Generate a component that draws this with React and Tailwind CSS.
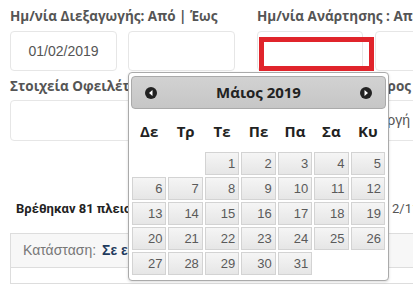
import React from 'react'

const dayNames = ['Δε', 'Τρ', 'Τε', 'Πε', 'Πα', 'Σα', 'Κυ']

// May 2019 starts on a Wednesday
const days = [null, null, ...Array.from({ length: 31 }, (_, i) => i + 1), null, null]

const label = "text-[13.5px] leading-[20px] h-[20px] font-bold text-[#555] whitespace-nowrap font-['Open_Sans',sans-serif]"
const input = 'h-[40px] bg-white border border-[#e6e6e6] rounded-[4px]'

const Arrow = ({ dir }) => (
    <svg width="12" height="12" viewBox="0 0 12 12">
        <circle cx="6" cy="6" r="6" fill="#222" />
        {dir === 'prev'
            ? <polygon points="7.5,3 7.5,9 4,6" fill="#fff" />
            : <polygon points="4.5,3 4.5,9 8,6" fill="#fff" />}
    </svg>
)

const DatePicker = () => {
    return (
        <div className="absolute left-[128px] top-[72px] w-[261px] h-[209px] bg-white border border-[#aaa] rounded-[4px] px-[2px] pt-[3px] shadow-[0_1px_3px_rgba(0,0,0,0.15)]">
            <div className="h-[33px] flex items-center justify-between px-[13px] rounded-[4px] border border-[#aaa] bg-gradient-to-b from-[#d2d2d2] to-[#c6c6c6]">
                <Arrow dir="prev" />
                <span className="text-[15px] font-bold text-[#222] font-['Open_Sans',sans-serif]">Μάιος 2019</span>
                <Arrow dir="next" />
            </div>
            <div className="grid grid-cols-7">
                {dayNames.map((d) => (
                    <div key={d} className="h-[42px] pt-[2px] flex items-center justify-center text-[15px] font-bold text-[#222] font-['Open_Sans',sans-serif]">
                        {d}
                    </div>
                ))}
                {days.map((d, i) => (
                    <div key={i} className="p-[1px]">
                        {d ? (
                            <div className="h-[23px] border border-[#d3d3d3] bg-gradient-to-b from-[#f5f5f5] to-[#e6e6e6] text-right pr-[3px] pt-[1px] text-[13px] leading-[20px] text-[#5a5a5a] font-['Liberation_Sans',sans-serif]">
                                {d}
                            </div>
                        ) : (
                            <div className="h-[23px]" />
                        )}
                    </div>
                ))}
            </div>
        </div>
    )
}

const App = () => {
    return (
        <div className="relative w-[413px] h-[294px] overflow-hidden bg-white">
            <div className="pl-[10px]">
                <div className="flex">
                    <div className="w-[225px] shrink-0">
                        <div className={`${label} mt-[6px]`}>Ημ/νία Διεξαγωγής: Από | Έως</div>
                        <div className="flex gap-[11px] mt-[5px]">
                            <div className={`${input} w-[107px] flex items-center justify-center text-[14px] text-[#555] font-['Liberation_Sans',sans-serif]`}>01/02/2019</div>
                            <div className={`${input} w-[107px]`}></div>
                        </div>
                    </div>
                    <div className="ml-[22px] shrink-0">
                        <div className={`${label} mt-[6px]`}>Ημ/νία Ανάρτησης : Από | Έως</div>
                        <div className="flex gap-[12px] mt-[5px]">
                            <div className={`${input} w-[106px]`}></div>
                            <div className={`${input} w-[106px]`}></div>
                        </div>
                    </div>
                </div>

                <div className="flex">
                    <div className="w-[225px] shrink-0">
                        <div className={`${label} mt-[5px]`}>Στοιχεία Οφειλέτη</div>
                        <div className={`${input} h-[41px] mt-[4px]`}></div>
                    </div>
                    <div className="ml-[22px] w-[154px] shrink-0">
                        <div className={`${label} mt-[5px] text-right`}>Φορέας Προς</div>
                        <div className={`${input} h-[41px] mt-[4px] w-[200px] flex items-center justify-end pr-[46px] text-[14px] text-[#555] font-['Liberation_Sans',sans-serif]`}>Ενεργή</div>
                    </div>
                </div>

                <div className="flex justify-between mt-[58px] h-[20px] items-center pl-[6px] font-['Roboto',sans-serif]">
                    <span className="text-[13px] font-bold text-[#222]">Βρέθηκαν 81 πλειστηριασμοί</span>
                    <span className="text-[13px] text-[#555] w-[21px] overflow-hidden whitespace-nowrap">2/11</span>
                </div>

                <div className="mt-[14px] w-[420px] border border-[#ddd]">
                    <div className="h-[33px] bg-[#f7f7f7] flex items-center pl-[12px] gap-[6px] text-[14px] font-['Liberation_Sans',sans-serif]">
                        <span className="text-[#777]">Κατάσταση:</span>
                        <span className="font-bold text-[#1f3b5e]">Σε εξέλιξη</span>
                    </div>
                    <div className="h-[16px] border-t border-[#ddd] bg-white"></div>
                </div>
            </div>

            <DatePicker />

            <div className="absolute left-[259px] top-[37px] w-[115px] h-[34px] border-[5px] border-[#e0242b]"></div>
        </div>
    )
}

export default App
